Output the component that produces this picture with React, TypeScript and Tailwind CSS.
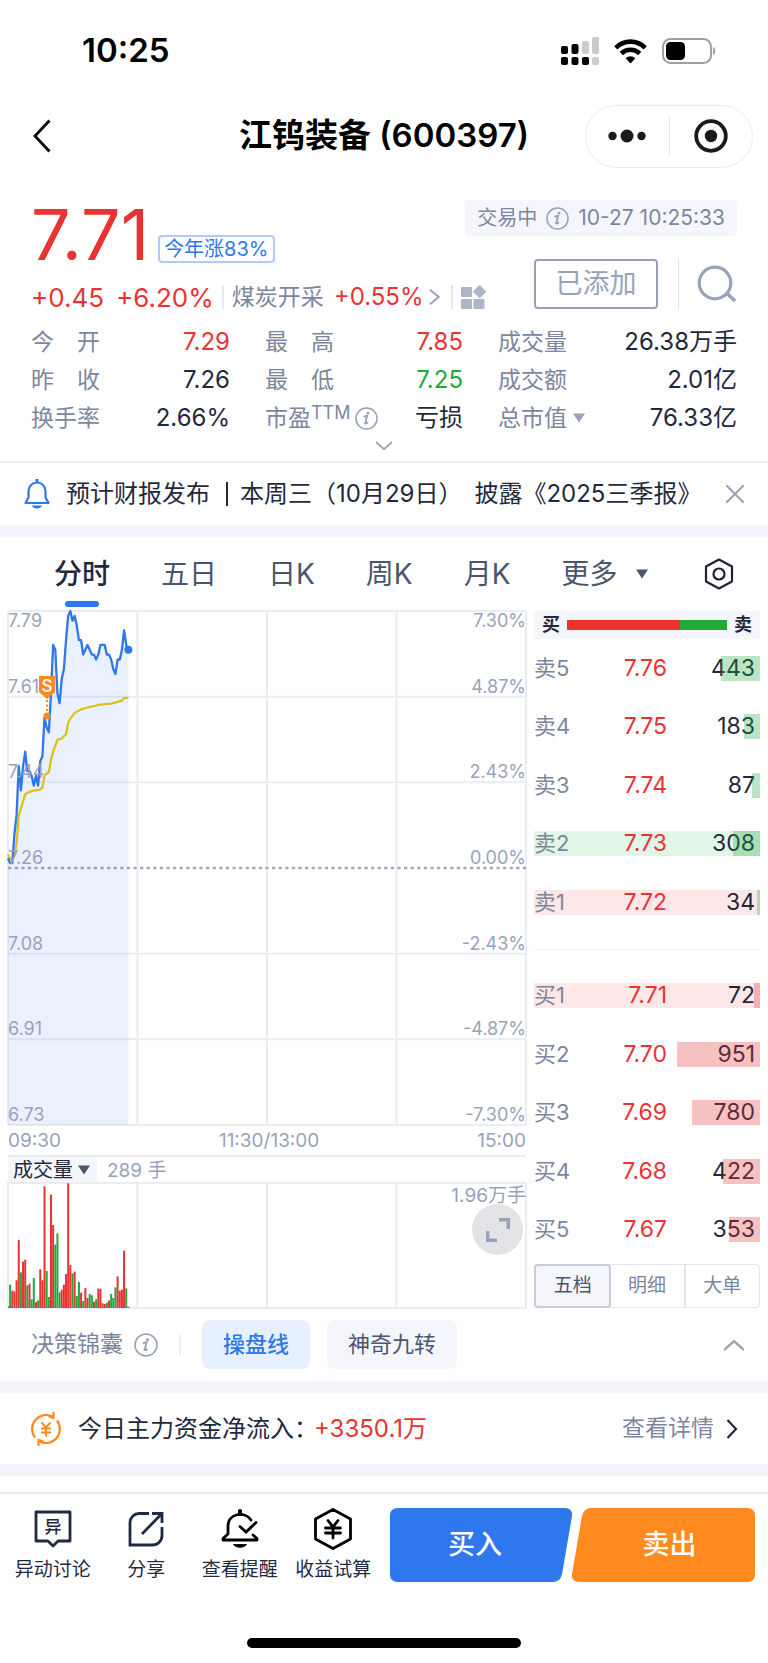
import { useState } from "react";
import clsx from "clsx";

const RED = "#e93333";
const GREEN = "#1faa3c";

// one price per minute since 09:30
const prices = [
  7.28, 7.27, 7.27, 7.33, 7.37, 7.47, 7.42, 7.47, 7.5, 7.46, 7.46, 7.45, 7.43, 7.45, 7.43, 7.48, 7.49, 7.57, 7.55,
  7.54, 7.62, 7.72, 7.71, 7.62, 7.6, 7.65, 7.67, 7.73, 7.78, 7.79, 7.77, 7.78, 7.76, 7.73, 7.73, 7.7, 7.71, 7.72,
  7.71, 7.7, 7.7, 7.69, 7.7, 7.72, 7.72, 7.72, 7.7, 7.7, 7.69, 7.67, 7.66, 7.69, 7.69, 7.71, 7.75, 7.72, 7.71,
];

// [minute, average price]
const averages = [
  [0, 7.288], [1, 7.279], [2, 7.277], [3, 7.286], [4, 7.31], [5, 7.369], [6, 7.383], [8, 7.412], [9.5, 7.416],
  [12, 7.42], [14.6, 7.421], [16, 7.426], [17, 7.45], [18, 7.455], [19, 7.458], [20, 7.483], [21, 7.5], [23, 7.524],
  [25, 7.527], [27, 7.536], [28, 7.56], [29, 7.568], [31, 7.58], [34, 7.587], [37, 7.591], [43, 7.597], [48, 7.599],
  [53, 7.605], [54, 7.611], [56, 7.611],
];

// volume per minute, negative = down tick
const volumes = [
  5, -70, 52, 50, 83, 204, -107, 139, 145, -68, 73, -26, -90, 18, -23, 116, 83, 365, -111, -33, 340, 249, -190, -224,
  -47, 55, 70, 102, 374, 129, -104, 109, -36, -78, 46, -21, 60, 30, -42, -38, 19, -26, 58, 58, 14, 12, -16, 23, -42,
  -30, -62, 95, 52, 55, 172, -59, -4,
];

const CHART_W = 518;
const CHART_H = 514;
const VOL_H = 125;
const MINUTES = 241;

const toX = (minute: number) => (minute / MINUTES) * CHART_W;
const toY = (price: number) => ((7.79 - price) / 1.06) * CHART_H;

const priceLine = prices.map((p, i) => `${toX(i)},${toY(p)}`).join(" ");
const averageLine = averages.map(([m, p]) => `${toX(m)},${toY(p)}`).join(" ");
const lastX = toX(prices.length - 1);

const axis = [
  { price: "7.61", pct: "4.87%" },
  { price: "7.44", pct: "2.43%" },
  { price: "7.26", pct: "0.00%" },
  { price: "7.08", pct: "-2.43%" },
  { price: "6.91", pct: "-4.87%" },
  { price: "6.73", pct: "-7.30%" },
];

type Level = { name: string; price: string; qty: number; flash?: "up" | "down" };

const asks: Level[] = [
  { name: "卖5", price: "7.76", qty: 443 },
  { name: "卖4", price: "7.75", qty: 183 },
  { name: "卖3", price: "7.74", qty: 87 },
  { name: "卖2", price: "7.73", qty: 308, flash: "down" },
  { name: "卖1", price: "7.72", qty: 34, flash: "up" },
];

const bids: Level[] = [
  { name: "买1", price: "7.71", qty: 72, flash: "up" },
  { name: "买2", price: "7.70", qty: 951 },
  { name: "买3", price: "7.69", qty: 780 },
  { name: "买4", price: "7.68", qty: 422 },
  { name: "买5", price: "7.67", qty: 353 },
];

const periods = ["分时", "五日", "日K", "周K", "月K"];

const InfoIcon = ({ className }: { className?: string }) => (
  <svg viewBox="0 0 24 24" className={clsx("shrink-0", className)} fill="none" stroke="#98a3ba">
    <circle cx="12" cy="12" r="11" strokeWidth="1.6" />
    <path d="M9 10.6c1-.9 2.300-1.300 3.600-1.300l-2 7.800c.9.2 2-.3 2.900-1.200" strokeWidth="2" />
    <circle cx="13.500" cy="6.400" r="1.500" fill="#98a3ba" stroke="none" />
  </svg>
);

const Chevron = ({ className, d }: { className?: string; d: string }) => (
  <svg viewBox="0 0 20 20" className={clsx("shrink-0", className)} fill="none" stroke="currentColor" strokeWidth="2.400">
    <path d={d} />
  </svg>
);

const Triangle = ({ className }: { className?: string }) => (
  <svg viewBox="0 0 12 10" className={clsx("pointer-events-none w-3 shrink-0", className)} fill="currentColor">
    <path d="M0 .5h12L6 9.500Z" />
  </svg>
);

const StatusBar = () => (
  <div className="flex h-[102px] items-center justify-between pr-[52px] pl-[82px] text-black">
    <span className="text-[33px] font-semibold">10:25</span>
    <div className="flex items-center gap-[15px]">
      <svg width="38" height="28" viewBox="0 0 38 28">
        <rect x="0" y="9" width="7" height="8" rx="2" />
        <rect x="10.500" y="7" width="7" height="10" rx="2" />
        <rect x="21" y="4" width="7" height="13" rx="2" fill="#cbcbcb" />
        <rect x="31" y="0" width="7" height="17" rx="2" fill="#cbcbcb" />
        <rect x="0" y="20" width="7" height="8" rx="2" />
        <rect x="10.500" y="20" width="7" height="8" rx="2" />
        <rect x="21" y="20" width="7" height="8" rx="2" />
        <rect x="31" y="20" width="7" height="8" rx="2" fill="#cbcbcb" />
      </svg>
      <svg width="33" height="26" viewBox="0 0 33 26" fill="none" stroke="#000" strokeWidth="4.600">
        <path d="M1.800 9.800C10 1.500 23 1.500 31.200 9.800" />
        <path d="M7.300 15.500c5.200-5 13.200-5 18.400 0" />
        <path d="M16.500 25.500 11.600 20.200c2.600-2.700 7.200-2.700 9.800 0Z" fill="#000" stroke="none" />
      </svg>
      <svg width="54" height="26" viewBox="0 0 54 26">
        <rect x="1" y="1" width="48" height="24" rx="7.500" fill="none" stroke="#a0a0a0" strokeWidth="2" />
        <rect x="4" y="4" width="19" height="18" rx="4.500" />
        <path d="M51 9c3 1 3 7 0 8Z" fill="#a0a0a0" />
      </svg>
    </div>
  </div>
);

const NavBar = () => (
  <header className="grid h-[68px] grid-cols-[1fr_auto_1fr] items-center px-[15px]">
    <button aria-label="返回" className="ml-[18px] w-fit">
      <svg width="18" height="34" viewBox="0 0 18 34" fill="none" stroke="#111" strokeWidth="3">
        <path d="M16.500 1.500 2 17l14.500 15.500" />
      </svg>
    </button>
    <h1 className="text-[33px] font-semibold whitespace-nowrap text-black">江钨装备 (600397)</h1>
    <div className="flex h-[63px] w-[168px] items-center justify-self-end rounded-full border border-[#ececec]">
      <button aria-label="更多操作" className="flex flex-1 justify-center">
        <svg width="38" height="14" viewBox="0 0 38 14" fill="#1a1a1a">
          <circle cx="4.500" cy="7" r="4.200" />
          <circle cx="19" cy="7" r="6.500" />
          <circle cx="33.500" cy="7" r="4.200" />
        </svg>
      </button>
      <span className="h-10 w-px bg-[#e8e8e8]" />
      <button aria-label="关闭" className="flex flex-1 justify-center">
        <svg width="36" height="36" viewBox="0 0 36 36">
          <circle cx="18" cy="18" r="14.800" fill="none" stroke="#1a1a1a" strokeWidth="3.800" />
          <circle cx="18" cy="18" r="6.200" fill="#1a1a1a" />
        </svg>
      </button>
    </div>
  </header>
);

const Quote = () => (
  <section className="px-[31px] pt-[30px] pb-[6px]">
    <div className="flex h-[63px] items-end">
      <strong className="text-[70px] leading-[56px] font-normal text-[#e93333]">7.71</strong>
      <span className="ml-[9px] flex h-7 items-center rounded-sm border-2 border-[#aecbfa] px-1 text-xl leading-none text-[#2f77ec]">
        今年涨83%
      </span>
      <div className="ml-auto flex h-9 items-center gap-[9px] self-start rounded-sm bg-[#f5f6fb] px-3 text-xl text-[#7c879f]">
        交易中
        <InfoIcon className="size-[23px]" />
        <time className="text-[21px]">10-27 10:25:33</time>
      </div>
    </div>

    <div className="-mt-1 flex h-[55px]">
      <div className="flex h-[34px] items-center self-end whitespace-nowrap text-[#e93333]">
        <span className="text-[26px]">+0.45</span>
        <span className="ml-3 text-[26px]">+6.20%</span>
        <span className="mx-2 h-6 w-[2px] bg-[#e6e8f0]" />
        <a href="#" className="flex items-center text-2xl">
          <span className="mr-[10px] text-[23px] text-[#7c879f]">煤炭开采</span>
          +0.55%
          <Chevron className="ml-[2px] size-4 text-[#98a3ba]" d="M5 1l11 9L5 19" />
        </a>
        <span className="mr-2 ml-[9px] h-6 w-[2px] bg-[#e6e8f0]" />
        <svg width="26" height="24" viewBox="0 0 26 24" fill="#adb5c7">
          <rect x="0" y="2" width="11" height="10" rx="1" />
          <rect x="0" y="14" width="11" height="10" rx="1" />
          <rect x="12.500" y="14" width="11" height="10" rx="1" />
          <rect x="13.800" y="1.800" width="9.600" height="9.600" rx="1" transform="rotate(45 18.600 6.600)" />
        </svg>
      </div>
      <div className="ml-auto flex h-[50px] items-center">
        <button className="h-[50px] w-[124px] rounded-sm border-2 border-[#98a3ba] text-[27px] text-[#98a3ba]">
          已添加
        </button>
        <span className="ml-5 h-full w-px bg-[#dfe2ea]" />
        <button aria-label="搜索" className="ml-[18px]">
          <svg width="40" height="38" viewBox="0 0 40 38" fill="none" stroke="#98a3ba" strokeWidth="3.200">
            <circle cx="18" cy="18" r="15.800" />
            <path d="M29 27.500l9 8.500" strokeWidth="3.600" />
          </svg>
        </button>
      </div>
    </div>

    <dl className="mt-[9px] grid grid-cols-[199fr_198fr_239fr] gap-x-[35px] text-2xl leading-[38px] whitespace-nowrap text-[#1f293d] [&_dt]:text-[23px] [&_dt]:text-[#7c879f] [&>div]:flex [&>div]:justify-between">
      <div>
        <dt>今　开</dt>
        <dd className="text-[#e93333]">7.29</dd>
      </div>
      <div>
        <dt>最　高</dt>
        <dd className="text-[#e93333]">7.85</dd>
      </div>
      <div>
        <dt>成交量</dt>
        <dd>26.38万手</dd>
      </div>
      <div>
        <dt>昨　收</dt>
        <dd>7.26</dd>
      </div>
      <div>
        <dt>最　低</dt>
        <dd className="text-[#1faa3c]">7.25</dd>
      </div>
      <div>
        <dt>成交额</dt>
        <dd>2.01亿</dd>
      </div>
      <div>
        <dt>换手率</dt>
        <dd>2.66%</dd>
      </div>
      <div>
        <dt className="flex items-center">
          市盈
          <span className="h-full text-lg leading-7">TTM</span>
          <InfoIcon className="ml-1 size-[23px]" />
        </dt>
        <dd>亏损</dd>
      </div>
      <div>
        <dt className="flex items-center">
          <select aria-label="市值类型" className="-mr-5 appearance-none pr-[26px] leading-[38px]">
            <option>总市值</option>
            <option>流通值</option>
          </select>
          <Triangle className="text-[#98a3ba]" />
        </dt>
        <dd>76.33亿</dd>
      </div>
    </dl>
    <button aria-label="展开" className="mx-auto flex h-[18px] w-10 items-center justify-center text-[#98a3ba]">
      <Chevron className="size-4" d="M0 5l10 9 10-9" />
    </button>
  </section>
);

const Notice = () => (
  <section className="flex h-16 items-center border-t-2 border-[#ecedf5] px-6 text-2xl whitespace-nowrap text-[#1f293d]">
    <svg width="26" height="30" viewBox="0 0 26 30" fill="none" stroke="#2f77ec" strokeWidth="2.200">
      <path d="M4.500 18.500V12a8.500 8.500 0 0 1 17 0v6.500l3 5.500h-23Z" strokeLinejoin="round" />
      <path d="M13 0v3" strokeWidth="3" />
      <path d="M8 26.500h10c-1 4-9 4-10 0Z" fill="#2f77ec" stroke="none" />
    </svg>
    <p className="ml-4">预计财报发布</p>
    <span className="ml-4 h-6 w-[2px] bg-[#1f293d]" />
    <p className="ml-3 flex">
      本周三<span>（10月29日）</span>
      <span className="ml-3">披露</span>
      <span>《2025三季报》</span>
    </p>
    <button aria-label="关闭提醒" className="ml-auto text-[#98a3ba]">
      <Chevron className="size-[18px]" d="M0 0l20 20M20 0L0 20" />
    </button>
  </section>
);

const PeriodTabs = () => {
  const [active, setActive] = useState("分时");

  return (
    <nav className="flex h-[74px] items-center gap-[51px] pr-[34px] pl-[54px] text-[28px] whitespace-nowrap text-[#4a556e]">
      {periods.map((p) => (
        <button
          key={p}
          onClick={() => setActive(p)}
          className={clsx("relative h-full", p === active && "font-medium text-[#1f293d]")}
        >
          {p}
          {p === active && (
            <span className="absolute bottom-1 left-1/2 h-[6px] w-[34px] -translate-x-1/2 rounded-full bg-[#2f77ec]" />
          )}
        </button>
      ))}
      <button aria-haspopup="menu" className="flex items-center gap-[18px]">
        更多
        <Triangle />
      </button>
      <button aria-label="图表设置" className="ml-auto">
        <svg width="30" height="32" viewBox="0 0 30 32" fill="none" stroke="#1f2430" strokeWidth="2.200">
          <path d="M15 1.500 28 8.500v15L15 30.500 2 23.500v-15Z" strokeLinejoin="round" />
          <circle cx="15" cy="16" r="5.500" />
        </svg>
      </button>
    </nav>
  );
};

const TimeChart = () => (
  <div className="relative h-[514px] text-lg leading-5 text-[#98a3ba]">
    <svg
      viewBox={`0 0 ${CHART_W} ${CHART_H}`}
      preserveAspectRatio="none"
      className="absolute inset-0 h-full w-full overflow-visible"
      fill="none"
    >
      <g stroke="#ebecf3" strokeWidth="2">
        {[0, 1, 2, 4, 5, 6].map((i) => (
          <path key={i} d={`M0 ${(i * CHART_H) / 6}H${CHART_W}`} />
        ))}
        {[0, 1, 2, 3, 4].map((i) => (
          <path key={i} d={`M${(i * CHART_W) / 4} 0V${CHART_H}`} />
        ))}
      </g>
      <path d={`M0 ${CHART_H / 2}H${CHART_W}`} stroke="#a3abc0" strokeWidth="2.400" strokeDasharray="3.300 3.300" />
      <polygon points={`0,${CHART_H} ${priceLine} ${lastX},${CHART_H}`} fill="#2f77ec" fillOpacity="0.1" />
      <polyline points={averageLine} stroke="#dcc31b" strokeWidth="2.300" />
      <polyline points={priceLine} stroke="#2f77ec" strokeWidth="2.300" strokeLinejoin="round" />
      <circle cx={lastX} cy={toY(7.71)} r="4" fill="#2f77ec" />
    </svg>
    <div className="relative grid h-full grid-rows-6">
      {axis.map((row, i) => (
        <div key={row.price} className="relative flex items-end justify-between">
          {i === 0 && (
            <div className="absolute inset-x-0 top-0 flex justify-between">
              <span>7.79</span>
              <span>7.30%</span>
            </div>
          )}
          <span>{row.price}</span>
          <span>{row.pct}</span>
        </div>
      ))}
    </div>
    {/* sell marker */}
    <svg width="16" height="44" viewBox="0 0 16 44" className="absolute top-[65px] left-[6%]">
      <path d="M0 0h16v16l-8 7-8-7Z" fill="#ff8a1f" />
      <path d="M8 24v12" stroke="#ff8a1f" strokeWidth="2" strokeDasharray="2 2.500" />
      <circle cx="8" cy="40" r="3.500" fill="#ff8a1f" />
      <text x="8" y="16" textAnchor="middle" fontSize="17" fontWeight="500" fill="#fff">
        S
      </text>
    </svg>
  </div>
);

const VolumeChart = () => (
  <>
    <div className="flex h-7 items-center border-t-2 border-[#ebecf3] text-xl leading-none">
      <div className="flex h-full items-center bg-[#f5f6fb] pr-[7px] pl-[5px] text-[#1f293d]">
        <select aria-label="副图指标" className="-mr-4 appearance-none pr-5 leading-none">
          <option>成交量</option>
          <option>MACD</option>
        </select>
        <Triangle className="text-[#4a556e]" />
      </div>
      <span className="ml-[10px] text-[19px] text-[#98a3ba]">289 手</span>
    </div>
    <div className="relative h-[125px]">
      <svg
        viewBox={`0 0 ${CHART_W} ${VOL_H}`}
        preserveAspectRatio="none"
        className="absolute inset-0 h-full w-full overflow-visible"
      >
        <path
          d={`M0 0H${CHART_W}V${VOL_H}H0ZM129.500 0V${VOL_H}M259 0V${VOL_H}M388.500 0V${VOL_H}`}
          fill="none"
          stroke="#ebecf3"
          strokeWidth="2"
        />
        {volumes.map((v, i) => (
          <rect
            key={i}
            x={toX(i) - (i === 0 ? 0 : 1)}
            y={VOL_H - Math.abs(v) / 3}
            width="2"
            height={Math.abs(v) / 3}
            fill={v > 0 ? RED : GREEN}
          />
        ))}
      </svg>
      <span className="absolute top-0 right-0 text-[19px] leading-[26px] text-[#98a3ba]">1.96万手</span>
      <button
        aria-label="全屏"
        className="absolute right-[3px] bottom-[53px] flex size-[51px] items-center justify-center rounded-full bg-[#e3e3e5]"
      >
        <svg width="24" height="24" viewBox="0 0 24 24" fill="none" stroke="#98a3ba" strokeWidth="3.400">
          <path d="M13 1.700h9.300V11M1.700 13v9.300H11" />
        </svg>
      </button>
    </div>
  </>
);

const Levels = ({ rows, side }: { rows: Level[]; side: "ask" | "bid" }) => (
  <table className="flex flex-1 text-[23px] leading-[25px]">
    <tbody className="flex flex-1 flex-col justify-around">
      {rows.map((r) => (
        <tr
          key={r.name}
          className={clsx(
            "relative flex h-[25px] pr-[5px]",
            r.flash === "up" && "bg-[#fee7e7]",
            r.flash === "down" && "bg-[#e2f6e7]"
          )}
        >
          <td className="flex-1 text-[22px] text-[#7c879f]">{r.name}</td>
          <td className="text-[#e93333]">{r.price}</td>
          <td className="w-[88px] text-right text-[#1f293d]">{r.qty}</td>
          <td
            aria-hidden="true"
            className={clsx("absolute inset-y-0 right-0", side === "ask" ? "bg-[#1faa3c]/30" : "bg-[#e93333]/30")}
            style={{ width: `${(r.qty / 951) * 36.7}%` }}
          />
        </tr>
      ))}
    </tbody>
  </table>
);

const OrderBook = () => {
  const [view, setView] = useState("五档");

  return (
    <aside className="flex w-[226px] shrink-0 flex-col">
      <div className="flex h-7 items-center justify-between bg-[#f5f6fb] px-2 text-lg leading-none font-semibold text-[#1f293d]">
        买
        <div className="flex h-[10px] w-40">
          <span className="flex-[113] bg-[#e93333]" />
          <span className="flex-[47] bg-[#1faa3c]" />
        </div>
        卖
      </div>
      <Levels rows={asks} side="ask" />
      <div className="my-[17px] h-px bg-[#f1f2f6]" />
      <Levels rows={bids} side="bid" />
      <div className="mt-[5px] flex h-11 rounded-sm border border-[#e3e5ee] text-[19px]">
        {["五档", "明细", "大单"].map((v) => (
          <button
            key={v}
            onClick={() => setView(v)}
            className={clsx(
              "flex-1",
              v === view
                ? "-m-px rounded-sm border-2 border-[#c9cddb] bg-[#f5f6fb] text-[#4a556e]"
                : "text-[#7c879f] last:border-l-2 last:border-[#e3e5ee]"
            )}
          >
            {v}
          </button>
        ))}
      </div>
    </aside>
  );
};

const Strategy = () => (
  <section className="flex h-[73px] items-center pr-6 pl-[31px] text-[23px] text-[#7c879f]">
    决策锦囊
    <InfoIcon className="ml-[11px] size-6" />
    <span className="mx-[21px] h-5 w-[2px] bg-[#ecedf3]" />
    <button className="h-[49px] rounded-lg bg-[#e6f0ff] px-[21px] text-[22px] font-medium text-[#2f77ec]">操盘线</button>
    <button className="ml-[17px] h-[49px] rounded-lg bg-[#f5f6fb] px-[21px] text-[22px] text-[#4a556e]">
      神奇九转
    </button>
    <button aria-label="收起" className="ml-auto text-[#98a3ba]">
      <Chevron className="size-5" d="M0 15l10-9 10 9" />
    </button>
  </section>
);

const FundFlow = () => (
  <section className="flex h-[71px] items-center pr-[30px] pl-[29px] text-2xl whitespace-nowrap text-[#1f293d]">
    <svg width="34" height="34" viewBox="0 0 34 34" fill="none" stroke="#ff8a1f" strokeWidth="2.200">
      <path d="M6 25.500A14 14 0 0 1 24 4.800" />
      <path d="M28 8.500A14 14 0 0 1 10 29.200" />
      <path d="M24.500 0v6l-5-1.500" />
      <path d="M9.500 34v-6l5 1.500" />
      <path d="M12.500 10.500l4.500 5 4.500-5M12 16.500h10M12 20.500h10M17 16v8.500" strokeWidth="2" />
    </svg>
    <span className="ml-[15px]">今日主力资金净流入：</span>
    <span className="-ml-1 text-[#e93333]">+3350.1万</span>
    <a href="#" className="ml-auto flex items-center gap-3 text-[23px] text-[#7c879f]">
      查看详情
      <svg width="12" height="20" viewBox="0 0 12 20" fill="none" stroke="#1f293d" strokeWidth="2.200">
        <path d="M1.500 1l8.500 9-8.500 9" />
      </svg>
    </a>
  </section>
);

const actions = [
  {
    label: "异动讨论",
    icon: (
      <svg width="40" height="42" viewBox="0 0 40 42" fill="none" stroke="#1f2a44" strokeWidth="2.800">
        <path d="M3 4h34v29H25l-5 5-5-5H3Z" strokeLinejoin="round" />
        <text x="20" y="25" textAnchor="middle" fontSize="17" fontWeight="500" fill="#1f2a44" stroke="none">
          异
        </text>
      </svg>
    ),
  },
  {
    label: "分享",
    icon: (
      <svg width="40" height="42" viewBox="0 0 40 42" fill="none" stroke="#1f2a44" strokeWidth="2.800">
        <path d="M23 5.500H13A9 9 0 0 0 4 14.500V37h22.500A9.500 9.500 0 0 0 36 27.500V19" />
        <path d="M16 26 35 6.500M26 5.500h10V15" />
      </svg>
    ),
  },
  {
    label: "查看提醒",
    icon: (
      <svg width="40" height="42" viewBox="0 0 40 42" fill="none" stroke="#000" strokeWidth="2.800">
        <path d="M31 12C25 3 8 5 8 18v8l-5 4.500V32h34v-1.500L33 27" strokeLinejoin="round" strokeLinecap="round" />
        <path d="M20 3v3" strokeWidth="4" strokeLinecap="round" />
        <path d="M20 18.500l6 5.500 10-9.500" strokeLinecap="round" />
        <path d="M13 36h14c-2 5-12 5-14 0Z" fill="#000" stroke="none" />
      </svg>
    ),
  },
  {
    label: "收益试算",
    icon: (
      <svg width="40" height="42" viewBox="0 0 40 42" fill="none" stroke="#000" strokeWidth="2.800">
        <path d="M20 1.500 37.500 11v20L20 40.500 2.500 31V11Z" strokeLinejoin="round" />
        <path d="M15 12.500l5 6.500 5-6.500M12.500 20h15M12.500 25h15M20 19v11" strokeLinecap="round" />
      </svg>
    ),
  },
];

const TradeBar = () => (
  <footer className="border-t-2 border-[#ebecf3] pt-[14px] pb-[17px]">
    <div className="flex pr-[13px] pl-[6px]">
      <div className="grid flex-[374] grid-cols-4">
        {actions.map((a) => (
          <button key={a.label} className="flex flex-col items-center whitespace-nowrap text-[#1f2a44]">
            {a.icon}
            <span className="mt-[6px] text-[19px] leading-7">{a.label}</span>
          </button>
        ))}
      </div>
      <button className="relative ml-[10px] h-[74px] flex-[182] text-[27px] font-medium text-white">
        <svg viewBox="0 0 183 74" preserveAspectRatio="none" className="absolute inset-0 h-full w-full" fill="#2f77ec">
          <path d="M8 0H175Q184 0 183 8L173 66Q171 74 164 74H8Q0 74 0 66V8Q0 0 8 0Z" />
        </svg>
        <span className="relative pr-3">买入</span>
      </button>
      <button className="relative h-[74px] flex-[183] text-[27px] font-medium text-white">
        <svg viewBox="0 0 183 74" preserveAspectRatio="none" className="absolute inset-0 h-full w-full" fill="#ff8a1f">
          <path d="M19 0H175Q183 0 183 8V66Q183 74 175 74H8Q-1 74 0 66L10 8Q12 0 19 0Z" />
        </svg>
        <span className="relative pl-3">卖出</span>
      </button>
    </div>
    <div className="mx-auto mt-[54px] h-[10px] w-[274px] rounded-full bg-black" />
  </footer>
);

const Band = () => <div className="h-3 bg-[#f4f5fa]" />;

export default function App() {
  return (
    <main className="w-full bg-white font-['Inter','Noto_Sans_CJK_SC',sans-serif]">
      <StatusBar />
      <NavBar />
      <Quote />
      <Notice />
      <Band />
      <PeriodTabs />
      <section className="flex gap-2 px-2">
        <div className="min-w-0 flex-1">
          <TimeChart />
          <div className="flex h-[30px] items-center justify-between pt-[2px] text-[19px] text-[#98a3ba]">
            <span>09:30</span>
            <span>11:30/13:00</span>
            <span>15:00</span>
          </div>
          <VolumeChart />
        </div>
        <OrderBook />
      </section>
      <Strategy />
      <Band />
      <FundFlow />
      <Band />
      <div className="h-4" />
      <TradeBar />
    </main>
  );
}
